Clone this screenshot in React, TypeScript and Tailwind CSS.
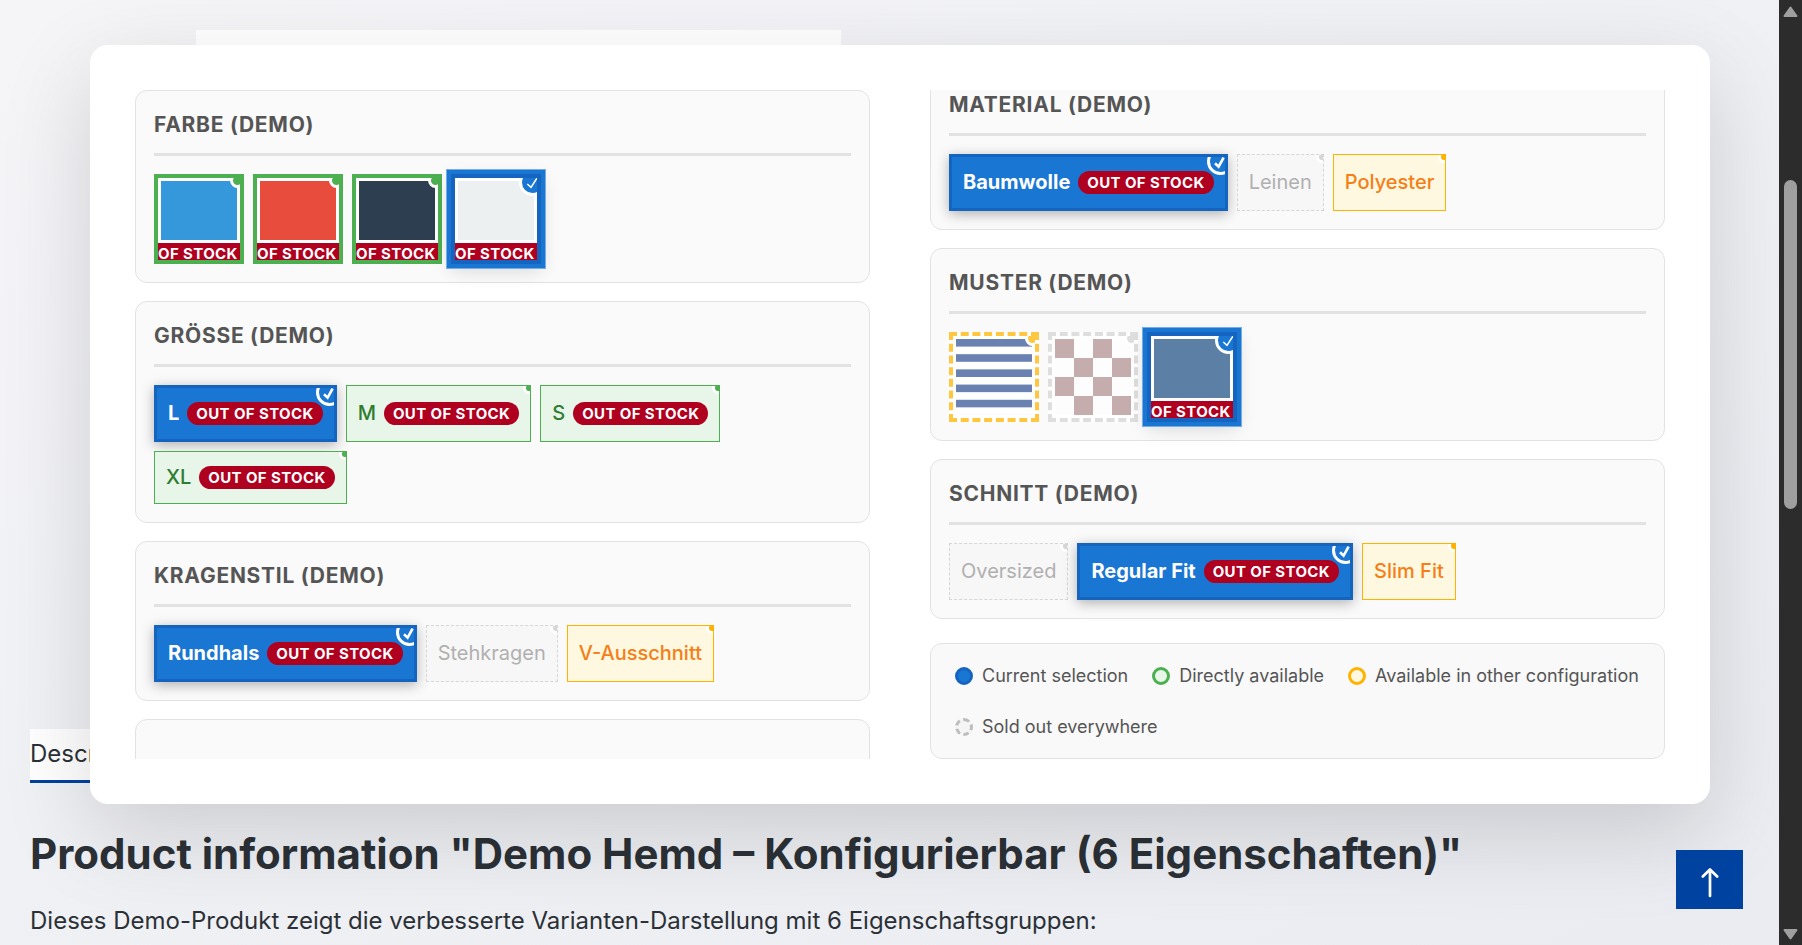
import { useState } from "react";
import clsx from "clsx";

type Status = "selected" | "available" | "other" | "soldout";

interface Option {
  name: string;
  status: Status;
  outOfStock?: boolean;
  fill?: string;
}

interface Group {
  title: string;
  options: Option[];
}

const leftGroups: Group[] = [
  {
    title: "FARBE (DEMO)",
    options: [
      { name: "Blau", status: "available", outOfStock: true, fill: "bg-[#3498db]" },
      { name: "Rot", status: "available", outOfStock: true, fill: "bg-[#e74c3c]" },
      { name: "Schwarz", status: "available", outOfStock: true, fill: "bg-[#2c3e50]" },
      { name: "Weiß", status: "selected", outOfStock: true, fill: "bg-[#ecf0f1]" },
    ],
  },
  {
    title: "GRÖSSE (DEMO)",
    options: [
      { name: "L", status: "selected", outOfStock: true },
      { name: "M", status: "available", outOfStock: true },
      { name: "S", status: "available", outOfStock: true },
      { name: "XL", status: "available", outOfStock: true },
    ],
  },
  {
    title: "KRAGENSTIL (DEMO)",
    options: [
      { name: "Rundhals", status: "selected", outOfStock: true },
      { name: "Stehkragen", status: "soldout" },
      { name: "V-Ausschnitt", status: "other" },
    ],
  },
];

const rightGroups: Group[] = [
  {
    title: "MATERIAL (DEMO)",
    options: [
      { name: "Baumwolle", status: "selected", outOfStock: true },
      { name: "Leinen", status: "soldout" },
      { name: "Polyester", status: "other" },
    ],
  },
  {
    title: "MUSTER (DEMO)",
    options: [
      {
        name: "Gestreift",
        status: "other",
        fill: "bg-[linear-gradient(#6a82b2_50%,#fff_50%)] bg-size-[100%_20%]",
      },
      {
        name: "Kariert",
        status: "soldout",
        fill: "bg-[repeating-conic-gradient(#fdfdfd_0_25%,#c5adad_0_50%)] bg-size-[38px_38px]",
      },
      { name: "Uni", status: "selected", outOfStock: true, fill: "bg-[#5c7fa5]" },
    ],
  },
  {
    title: "SCHNITT (DEMO)",
    options: [
      { name: "Oversized", status: "soldout" },
      { name: "Regular Fit", status: "selected", outOfStock: true },
      { name: "Slim Fit", status: "other" },
    ],
  },
];

const chipStyles: Record<Status, string> = {
  selected:
    "border-3 border-[#1565c0] bg-[#1976d2] font-bold text-white shadow-[0_3px_12px_rgba(0,0,0,0.3)]",
  available: "border border-[#4caf50] bg-[#e8f5e9] font-medium text-[#2e7d32]",
  other: "border border-[#ffb300] bg-[#fff8e1] font-medium text-[#f57f17]",
  soldout: "border border-dashed border-[#d6d6d6] bg-[#f7f7f7] text-[#b0b0b0]",
};

const swatchStyles: Record<Status, string> = {
  selected:
    "border-[#1565c0] shadow-[0_0_0_4px_#1976d2,0_0_0_5px_#75ade4,0_6px_18px_rgba(0,0,0,0.15)]",
  available: "border-[#4caf50]",
  other: "border-dashed border-[#ffc640]",
  soldout: "border-dashed border-[#dedede]",
};

const swatchDots: Record<Status, string> = {
  selected: "bg-[#1976d2]",
  available: "bg-[#4caf50]",
  other: "bg-[#ffc640]",
  soldout: "bg-[#dedede]",
};

const chipDots: Record<Status, string> = {
  selected: "bg-[#1976d2]",
  available: "bg-[#4caf50]",
  other: "bg-[#ffb300]",
  soldout: "bg-[#d6d6d6]",
};

/* Round tick in the top right corner of the chosen option */
function Tick({ bold }: { bold?: boolean }) {
  return (
    <span className="absolute -top-[9px] -right-[9px] flex size-[27px] items-center justify-center rounded-full border-3 border-white bg-[#1976d2]">
      <svg viewBox="0 0 21 21" className="size-[21px]" fill="none" stroke="#fff">
        <path
          d={bold ? "M5 12.2 L8.6 15.6 L13.6 6.6" : "M5.3 12 L9 15.3 L15 6"}
          strokeWidth={bold ? 2.6 : 1.5}
        />
      </svg>
    </span>
  );
}

function Swatch({ option, group }: { option: Option; group: string }) {
  const { name, status, outOfStock, fill } = option;
  return (
    <label
      title={name}
      className={clsx(
        "relative flex size-[90px] cursor-pointer flex-col overflow-hidden border-4 bg-white",
        swatchStyles[status]
      )}
    >
      <input
        type="radio"
        name={group}
        aria-label={name}
        defaultChecked={status === "selected"}
        className="sr-only"
      />
      <span className="flex flex-1 p-[3px]">
        <span className={clsx("flex-1", fill)} />
      </span>
      {outOfStock && (
        <span className="bg-[#b00020] pt-[5px] text-[15px] leading-3 font-bold tracking-wide whitespace-nowrap text-white">
          OF STOCK
        </span>
      )}
      {status === "selected" ? (
        <Tick />
      ) : (
        <span
          className={clsx(
            "absolute -top-[5px] -right-[5px] size-[15px] rounded-full border-3 border-white",
            swatchDots[status]
          )}
        />
      )}
    </label>
  );
}

function Chip({ option, group }: { option: Option; group: string }) {
  const { name, status, outOfStock } = option;
  return (
    <label
      className={clsx(
        "relative flex cursor-pointer items-center gap-2 overflow-hidden px-[11px] py-3 text-[20px] leading-[27px]",
        chipStyles[status]
      )}
    >
      <input
        type="radio"
        name={group}
        defaultChecked={status === "selected"}
        className="sr-only"
      />
      {name}
      {outOfStock && (
        <span className="rounded-full bg-[#b00020] px-[9px] text-[15px] leading-[23px] font-bold tracking-wide text-white">
          OUT OF STOCK
        </span>
      )}
      {status === "selected" ? (
        <Tick bold />
      ) : (
        <span
          className={clsx(
            "absolute -top-1 -right-[5px] size-3 rounded-full border-3 border-white",
            chipDots[status]
          )}
        />
      )}
    </label>
  );
}

function GroupCard({ group }: { group: Group }) {
  return (
    <section className="shrink-0 rounded-xl border border-[#e2e2e2] bg-[#fafafa] p-[18px]">
      <h3 className="mb-[18px] border-b-3 border-[#e2e2e2] pb-3 text-[21px] leading-8 font-bold tracking-[0.035em] text-[#555]">
        {group.title}
      </h3>
      <div role="radiogroup" aria-label={group.title} className="flex flex-wrap gap-[9px]">
        {group.options.map((option) =>
          option.fill ? (
            <Swatch key={option.name} option={option} group={group.title} />
          ) : (
            <Chip key={option.name} option={option} group={group.title} />
          )
        )}
      </div>
    </section>
  );
}

const legend = [
  { label: "Current selection", style: "border-[#1565c0] bg-[#1976d2]" },
  { label: "Directly available", style: "border-[#4caf50] bg-[#e8f5e9]" },
  { label: "Available in other configuration", style: "border-[#ffb300] bg-[#fff8e1]" },
  { label: "Sold out everywhere", style: "border-dashed border-[#bdbdbd] bg-[#f5f5f5]" },
];

function Legend() {
  return (
    <ul className="mt-1.5 flex shrink-0 flex-wrap gap-6 rounded-xl border border-[#e2e2e2] bg-[#f9f9f9] px-6 py-[18px]">
      {legend.map((item) => (
        <li key={item.label} className="flex items-center gap-[9px] text-[18px] leading-[27px] text-[#555]">
          <span className={clsx("size-[18px] rounded-full border-3", item.style)} />
          {item.label}
        </li>
      ))}
    </ul>
  );
}

function ConfiguratorModal() {
  return (
    <div className="absolute inset-0 flex pt-[45px] pr-[69px] pb-[141px] pl-[90px]">
      <div
        role="dialog"
        aria-label="Varianten"
        className="grid flex-1 grid-cols-2 gap-[60px] rounded-[18px] bg-white p-[45px] shadow-[0_30px_90px_rgba(0,0,0,0.15)]"
      >
        <div className="flex min-h-0 flex-col gap-[18px] overflow-hidden">
          {leftGroups.map((group) => (
            <GroupCard key={group.title} group={group} />
          ))}
          <section className="h-48 shrink-0 rounded-xl border border-[#e2e2e2] bg-[#fafafa]" />
        </div>
        {/* This column is scrolled to its end */}
        <div className="flex min-h-0 flex-col justify-end gap-[18px] overflow-hidden">
          {rightGroups.map((group) => (
            <GroupCard key={group.title} group={group} />
          ))}
          <Legend />
        </div>
      </div>
    </div>
  );
}

function Scrollbar() {
  return (
    <div aria-hidden="true" className="flex w-[23px] shrink-0 flex-col items-center bg-[#2c2c2c] py-[5px]">
      <svg viewBox="0 0 15 12" className="h-3 w-[15px]" fill="#9f9f9f" stroke="#9f9f9f" strokeWidth="2" strokeLinejoin="round">
        <path d="M7.5 2.5 L13.5 11 H1.5 Z" />
      </svg>
      <div className="flex flex-1 flex-col pt-[163px]">
        <div className="h-[44%] w-[13px] rounded-full bg-[#9f9f9f]" />
      </div>
      <svg viewBox="0 0 15 12" className="h-3 w-[15px]" fill="#9f9f9f" stroke="#9f9f9f" strokeWidth="2" strokeLinejoin="round">
        <path d="M7.5 10.5 L13.5 2 H1.5 Z" />
      </svg>
    </div>
  );
}

export default function App() {
  const [tab, setTab] = useState("description");

  return (
    <div className="flex h-screen overflow-hidden font-['Inter',sans-serif]">
      <main className="relative flex min-w-0 flex-1 flex-col overflow-hidden bg-linear-to-br from-[#f5f5f8] to-[#eaecf1] px-[30px] pt-[30px] text-[#2b3136]">
        {/* Product gallery */}
        <div className="ml-[166px] h-[600px] w-[645px] shrink-0 bg-white" />

        <div className="mt-[99px] flex shrink-0">
          <button
            type="button"
            onClick={() => setTab("description")}
            className={clsx(
              "border-b-3 bg-white pt-[7px] pb-2 text-[24px] leading-9",
              tab === "description" ? "border-[#0042a0]" : "border-transparent"
            )}
          >
            Description
          </button>
        </div>
        <h1 className="mt-11 text-[42px] leading-[54px] font-bold whitespace-nowrap">
          Product information "Demo Hemd – Konfigurierbar (6 Eigenschaften)"
        </h1>
        <p className="mt-[22px] text-[24px] leading-9">
          Dieses Demo-Produkt zeigt die verbesserte Varianten-Darstellung mit 6 Eigenschaftsgruppen:
        </p>

        <ConfiguratorModal />

        <button
          type="button"
          aria-label="Nach oben"
          className="absolute right-9 bottom-9 flex h-[59px] w-[67px] items-center justify-center bg-[#0042a0]"
        >
          <svg viewBox="0 0 20 36" className="h-9 w-5" fill="none" stroke="#fff" strokeWidth="2.7" strokeLinecap="round" strokeLinejoin="round">
            <path d="M10 34 V7.5 M2.8 14.5 L10 7.5 L17.2 14.5" />
          </svg>
        </button>
      </main>
      <Scrollbar />
    </div>
  );
}
